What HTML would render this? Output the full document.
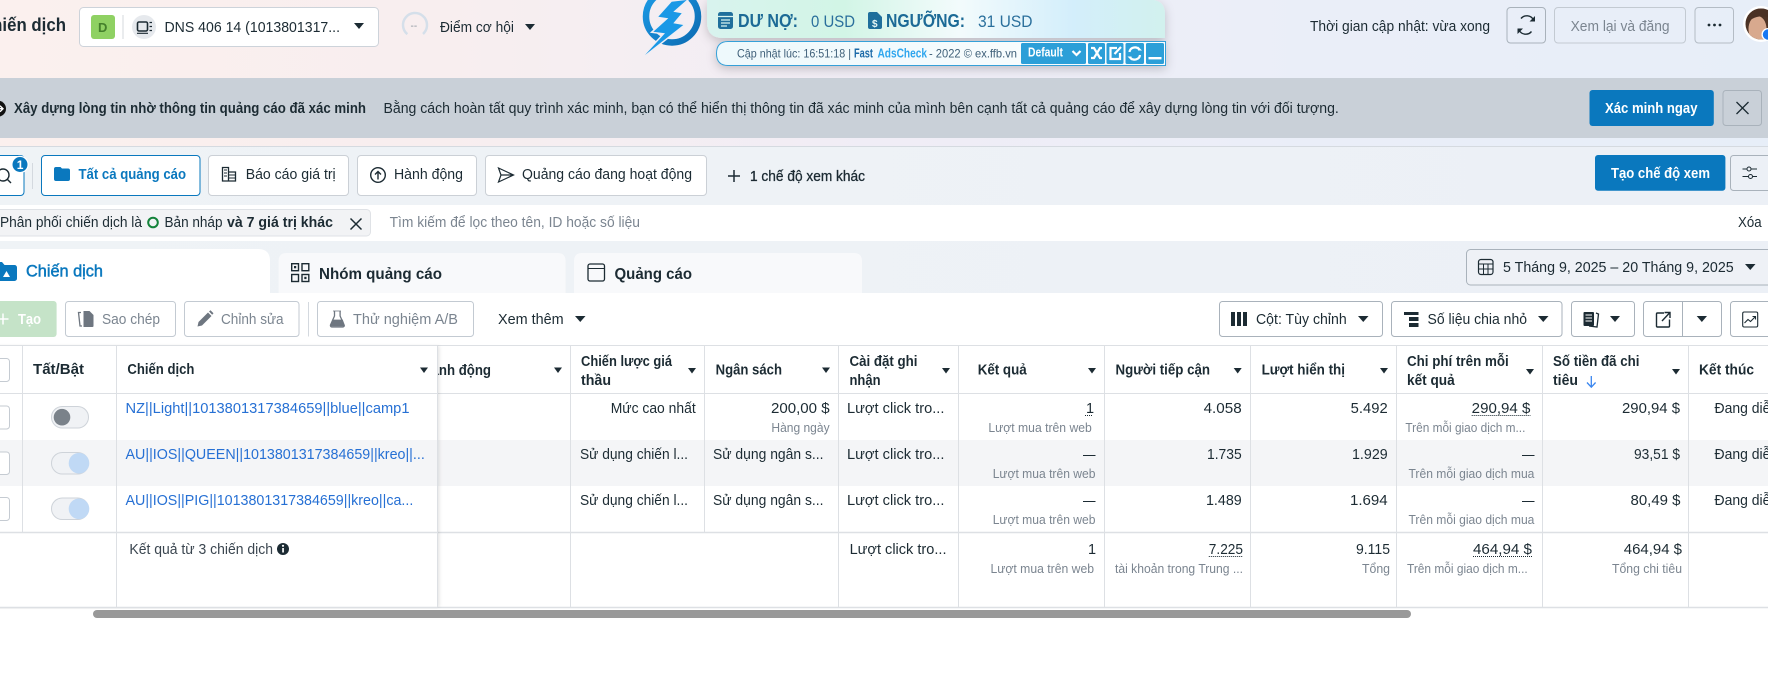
<!DOCTYPE html>
<html lang="vi">
<head>
<meta charset="utf-8">
<title>Chiến dịch</title>
<style>
html,body{margin:0;padding:0;width:1768px;height:683px;overflow:hidden;background:#fff}
svg{display:block}
text{font-family:"Liberation Sans","Noto Sans CJK SC",sans-serif;font-size:14.5px;fill:#1c2b33;white-space:pre}
.b{font-weight:700}
.m{stroke:#1c2b33;stroke-width:.3}
.s{font-size:12.5px;fill:#7b8590}
.l{fill:#2670d4}
.g{fill:#7b8590}
.w{fill:#fff}
.box{fill:#fff;stroke:#b4bcc5;stroke-width:1}
.tr{fill:#f2f4f6;stroke:#b4bcc5;stroke-width:1}
.ln{stroke:#dde0e4;stroke-width:1}
.ar{fill:#1c2b33}
.ico{fill:none;stroke:#1c2b33;stroke-width:1.4}
.wi{fill:none;stroke:#fff;stroke-width:2.2}
</style>
</head>
<body>
<svg width="1768" height="683" viewBox="0 0 1768 683" xmlns="http://www.w3.org/2000/svg">
<defs>
<linearGradient id="bg" x1="0" x2="1" y1="0" y2="0"><stop offset="0" stop-color="#fbf0ee"/><stop offset=".25" stop-color="#f8eeef"/><stop offset=".5" stop-color="#f0edf6"/><stop offset=".75" stop-color="#eaeef8"/><stop offset="1" stop-color="#e7eef8"/></linearGradient>
<linearGradient id="bg2" x1="0" x2="1" y1="0" y2="0"><stop offset="0" stop-color="#eff3f6"/><stop offset="1" stop-color="#ecf0f6"/></linearGradient>
<linearGradient id="pn" x1="0" x2="1" y1="0" y2="0"><stop offset="0" stop-color="#d8f3ee"/><stop offset=".3" stop-color="#d2f5e6"/><stop offset=".55" stop-color="#f3fbfc"/><stop offset=".8" stop-color="#d3eefb"/><stop offset="1" stop-color="#d2f1ee"/></linearGradient>
<linearGradient id="br" x1="0" x2="1" y1="0" y2="0"><stop offset="0" stop-color="#eef9fc"/><stop offset="1" stop-color="#fbfdfe"/></linearGradient>
<linearGradient id="rg" x1="0" x2="1" y1="0" y2="1"><stop offset="0" stop-color="#1c9be6"/><stop offset="1" stop-color="#0c6cb3"/></linearGradient>
<filter id="sd" x="-10%" y="-30%" width="120%" height="170%"><feDropShadow dx="0" dy="3" stdDeviation="5" flood-color="#000" flood-opacity=".2"/></filter>
<filter id="ss" x="-5%" y="-5%" width="110%" height="110%"><feDropShadow dx="2" dy="0" stdDeviation="1.5" flood-color="#000" flood-opacity=".1"/></filter>
<clipPath id="av"><circle cx="1761" cy="24" r="15.5"/></clipPath>
</defs>

<!-- backgrounds -->
<rect x="0" y="0" width="1768" height="146" fill="url(#bg)"/>
<rect x="0" y="78" width="1768" height="60" fill="#c9d0d8"/>
<rect x="0" y="146" width="1768" height="59" fill="url(#bg2)"/>
<rect x="0" y="146" width="1768" height="1" fill="#d5dae0"/>
<rect x="0" y="241" width="1768" height="52" fill="url(#bg2)"/>

<!-- top bar -->
<text class="b" x="-20" y="31" style="font-size:18px" textLength="86" lengthAdjust="spacingAndGlyphs">Chiến dịch</text>
<rect class="box" x="79.5" y="7.5" width="299" height="39" rx="4" style="stroke:#cdd3da"/>
<rect x="91" y="15" width="24" height="24" rx="3" fill="#8fd163"/>
<text class="b" x="98" y="32" style="font-size:13px;fill:#44802b">D</text>
<line x1="123" y1="15" x2="123" y2="39" stroke="#d5dade"/>
<circle cx="144" cy="27" r="12" fill="#e6e9ed"/>
<rect x="137.5" y="22" width="10" height="9" rx="1.5" fill="none" stroke="#1c2b33" stroke-width="1.6"/>
<path d="M137 33.3h11M149.5 22.5h2.500M149.5 26.5h2.500M149.5 30.5h2.500" stroke="#1c2b33" stroke-width="1.2"/>
<text x="164.5" y="32" style="font-size:15px" textLength="175.5" lengthAdjust="spacingAndGlyphs">DNS 406 14 (1013801317...</text>
<path class="ar" d="M354 23h10l-5 6z"/>
<circle cx="415" cy="25" r="12" fill="none" stroke="#d5dfea" stroke-width="2.5" stroke-dasharray="58 18" transform="rotate(130 415 25)"/>
<text x="410.5" y="29" style="font-size:10px;fill:#8a949e">--</text>
<text x="440" y="32" textLength="74" lengthAdjust="spacingAndGlyphs">Điểm cơ hội</text>
<path class="ar" d="M525 24h10l-5 6z"/>

<!-- logo -->
<circle cx="672" cy="16.5" r="26" fill="none" stroke="url(#rg)" stroke-width="6.5"/>
<path d="M686.7 0L671.7 1.7L658.3 16.7L668.3 18.3L653.3 31.7L665 33.3L645 55L683.3 25L673.3 23.3L681.7 13.3L673.3 11.7Z" fill="#f0eef4" stroke="#f0eef4" stroke-width="3"/>
<path d="M686.7 0L671.7 1.7L658.3 16.7L668.3 18.3L653.3 31.7L665 33.3L645 55L683.3 25L673.3 23.3L681.7 13.3L673.3 11.7Z" fill="#1a98e6"/>

<!-- checker panel -->
<g filter="url(#sd)">
<path d="M707 0H1154Q1165 2 1165 14V38H723Q707 38 707 22Z" fill="url(#pn)"/>
<path d="M728 41.5H1165.5V65.5H728Q716.5 65.5 716.5 53.5T728 41.5Z" fill="url(#br)" stroke="#35a0d8"/>
</g>
<path d="M718 14.5a2.5 2.5 0 0 1 2.5-2.5h10a2.5 2.5 0 0 1 2.5 2.5V26.5a2.5 2.5 0 0 1-2.5 2.5h-10a2.5 2.5 0 0 1-2.5-2.5Z" fill="#1f6f9c"/>
<path d="M718 16.5h15M721 20h9M721 23h9M721 26h6" stroke="#d8f3ee" stroke-width="1.2"/>
<text class="b" x="738" y="27" style="font-size:18px;fill:#1c6a96" textLength="60" lengthAdjust="spacingAndGlyphs">DƯ NỢ:</text>
<text x="811" y="27" style="font-size:17px;fill:#2a6f9c" textLength="44" lengthAdjust="spacingAndGlyphs">0 USD</text>
<path d="M868 14a2 2 0 0 1 2-2h7l5 5v10a2 2 0 0 1-2 2h-10a2 2 0 0 1-2-2Z" fill="#1f6f9c"/>
<text class="b" x="872" y="27" style="font-size:10px;fill:#e6f7f5">$</text>
<text class="b" x="886" y="27" style="font-size:18px;fill:#1c6a96" textLength="79" lengthAdjust="spacingAndGlyphs">NGƯỠNG:</text>
<text x="978" y="27" style="font-size:17px;fill:#2a6f9c" textLength="54.5" lengthAdjust="spacingAndGlyphs">31 USD</text>

<text x="737" y="57.5" style="font-size:12px;fill:#3e5f78" textLength="114" lengthAdjust="spacingAndGlyphs">Cập nhật lúc: 16:51:18 |</text>
<text class="b" x="854" y="57.5" style="font-size:12.5px;fill:#1c6aa8" textLength="19" lengthAdjust="spacingAndGlyphs">Fast</text>
<text class="b" x="877.5" y="57.5" style="font-size:12.5px;fill:#2fa6ee" textLength="49.5" lengthAdjust="spacingAndGlyphs">AdsCheck</text>
<text x="929" y="57.5" style="font-size:12px;fill:#3e5f78" textLength="88" lengthAdjust="spacingAndGlyphs">- 2022 © ex.ffb.vn</text>

<rect x="1021" y="43" width="65" height="21" rx="1.5" fill="#2c9fd8"/>
<text class="b w" x="1028" y="56.7" style="font-size:12.5px;fill:#fff" textLength="35" lengthAdjust="spacingAndGlyphs">Default</text>
<path class="wi" d="M1072.5 51l4 4 4-4"/>
<rect x="1088" y="43" width="17" height="21" rx="1.5" fill="#2c9fd8"/>
<path class="wi" d="M1091 48h3l6 10h2M1091 58h3l6-10h2"/>
<rect x="1106.5" y="43" width="17" height="21" rx="1.5" fill="#2c9fd8"/>
<path class="wi" d="M1117 48h-6.5v11h9.5v-6M1114.5 54l6.5-7"/>
<rect x="1125.5" y="43" width="18.500" height="21" rx="1.5" fill="#2c9fd8"/>
<path class="wi" d="M1129.5 52a5.5 5 0 0 1 9.5-3M1140 55a5.5 5 0 0 1-9.5 3"/>
<path d="M1138 46.5v4h4zM1131.5 60.5v-4h-4z" fill="#fff"/>
<rect x="1146" y="43" width="18" height="21" rx="1.5" fill="#2c9fd8"/>
<rect x="1148.5" y="57" width="13" height="2.4" fill="#fff"/>

<!-- top right -->
<text x="1310" y="31" textLength="180" lengthAdjust="spacingAndGlyphs">Thời gian cập nhật: vừa xong</text>
<rect x="1507" y="7.5" width="38.5" height="35.5" rx="3.5" fill="none" stroke="#a9b2bb"/>
<path class="ico" style="stroke-width:1.4" d="M1533.500 20a7.500 7.500 0 0 0-12.500-1.500M1519 30a7.500 7.500 0 0 0 12.500 1.500"/>
<path d="M1535 16v5.500h-5.500zM1517.500 34v-5.500h5.500z" fill="#1c2b33"/>
<rect x="1554.5" y="7.5" width="131" height="35.5" rx="3.5" fill="none" stroke="#c3cad2"/>
<text class="g" x="1570.6" y="31" textLength="99" lengthAdjust="spacingAndGlyphs">Xem lại và đăng</text>
<rect x="1695" y="7.5" width="38.5" height="35.5" rx="3.5" fill="none" stroke="#b4bcc5"/>
<circle cx="1709" cy="25" r="1.4" fill="#1c2b33"/><circle cx="1714.5" cy="25" r="1.4" fill="#1c2b33"/><circle cx="1720" cy="25" r="1.4" fill="#1c2b33"/>
<circle cx="1761" cy="24" r="18" fill="#fff"/>
<g clip-path="url(#av)">
<rect x="1745" y="8" width="32" height="32" fill="#4e3426"/>
<ellipse cx="1757.5" cy="29" rx="9" ry="13" fill="#d8a98e"/>
<path d="M1746 26Q1752 14 1768 17L1776 8H1745Z" fill="#4a3124"/>
</g>
<circle cx="1768" cy="34.5" r="6.5" fill="#fff"/><circle cx="1768" cy="34.5" r="5.2" fill="#1877f2"/>

<!-- banner -->
<circle cx="-2" cy="108.7" r="8" fill="#111"/>
<path d="M-5 108.7h8M0 105.700l3 3-3 3" stroke="#fff" stroke-width="1.4" fill="none"/>
<text class="b" x="14" y="113" textLength="352" lengthAdjust="spacingAndGlyphs">Xây dựng lòng tin nhờ thông tin quảng cáo đã xác minh</text>
<text x="383.5" y="113" textLength="955.3" lengthAdjust="spacingAndGlyphs">Bằng cách hoàn tất quy trình xác minh, bạn có thể hiển thị thông tin đã xác minh của mình bên cạnh tất cả quảng cáo để xây dựng lòng tin với đối tượng.</text>
<rect x="1589.5" y="90" width="124.3" height="36" rx="3" fill="#0a78be"/>
<text class="b w" x="1605" y="113" style="fill:#fff" textLength="92.5" lengthAdjust="spacingAndGlyphs">Xác minh ngay</text>
<rect x="1723" y="90.5" width="38.5" height="35" rx="3" fill="none" stroke="#a9b2bb"/>
<path d="M1736.5 102l12 12M1748.5 102l-12 12" stroke="#1c2b33" stroke-width="1.3"/>

<!-- views row -->
<rect x="-8" y="155.5" width="32" height="40" rx="3.5" fill="#fff" stroke="#0a78be"/>
<circle cx="3" cy="175" r="6" class="ico"/>
<path class="ico" d="M7.5 179.500l3.500 3.500"/>
<circle cx="20" cy="164.500" r="8.7" fill="#fff"/><circle cx="20" cy="164.500" r="7.5" fill="#0a78be"/>
<text class="b" x="16.8" y="169" style="font-size:12px;fill:#fff">1</text>
<line x1="32.5" y1="163" x2="32.5" y2="189" stroke="#d4d9df"/>

<rect x="41.5" y="155.5" width="158.500" height="40" rx="3.5" fill="#fff" stroke="#0a78be"/>
<path d="M54 169a2 2 0 0 1 2-2h4.500l1.500 1.500h6a2 2 0 0 1 2 2v8.500a2 2 0 0 1-2 2h-12a2 2 0 0 1-2-2Z" fill="#0a78be"/>
<text class="b" x="78.5" y="179" style="fill:#0a78be" textLength="107.500" lengthAdjust="spacingAndGlyphs">Tất cả quảng cáo</text>

<rect class="box" x="208.5" y="155.5" width="140" height="40" rx="3.5" style="stroke:#cbd0d6"/>
<path d="M222.5 181v-13.500h6v13.500zM228.5 172h7v9h-7z" fill="none" stroke="#1c2b33" stroke-width="1.3"/>
<path d="M224 170h3M224 173h3M224 176h3M228.5 175h7M228.5 178h7" stroke="#1c2b33" stroke-width="1.1"/>
<text x="245.7" y="179" textLength="90" lengthAdjust="spacingAndGlyphs">Báo cáo giá trị</text>

<rect class="box" x="357.5" y="155.5" width="119" height="40" rx="3.5" style="stroke:#cbd0d6"/>
<circle class="ico" cx="378" cy="175" r="7.3"/>
<path class="ico" d="M378 179.5v-8M375 174.5l3-3 3 3"/>
<text x="394" y="179" textLength="69" lengthAdjust="spacingAndGlyphs">Hành động</text>

<rect class="box" x="485.5" y="155.5" width="221" height="40" rx="3.5" style="stroke:#cbd0d6"/>
<path class="ico" style="stroke-width:1.2" d="M498.5 168l15 7-15 7 2.500-7zM501 175h12.500"/>
<text x="522" y="179" textLength="170" lengthAdjust="spacingAndGlyphs">Quảng cáo đang hoạt động</text>

<path d="M734 170v12M728 176h12" stroke="#1c2b33" stroke-width="1.5"/>
<text class="m" x="750" y="181" textLength="115" lengthAdjust="spacingAndGlyphs">1 chế độ xem khác</text>

<rect x="1595" y="155" width="130.4" height="35.7" rx="3" fill="#0a78be"/>
<text class="b" x="1611" y="178" style="fill:#fff" textLength="99" lengthAdjust="spacingAndGlyphs">Tạo chế độ xem</text>
<rect x="1730.5" y="155.5" width="50" height="35" rx="3" fill="none" stroke="#a9b2bb"/>
<path class="ico" style="stroke-width:1" d="M1742.5 169h4.500M1751 169h6M1742.5 176.500h6M1752.5 176.500h4.500"/>
<circle class="ico" style="stroke-width:1" cx="1749" cy="169" r="2"/><circle class="ico" style="stroke-width:1" cx="1750.5" cy="176.500" r="2"/>

<!-- filter row -->
<rect x="0" y="205" width="1768" height="36" fill="#fff"/>
<rect x="-10" y="209.5" width="380.5" height="26.5" rx="4" fill="#f2f3f5" stroke="#dfe2e6"/>
<text x="0" y="227" textLength="142" lengthAdjust="spacingAndGlyphs">Phân phối chiến dịch là</text>
<circle cx="153" cy="222.5" r="4.8" fill="none" stroke="#14833b" stroke-width="2"/>
<text x="164.5" y="227" textLength="58" lengthAdjust="spacingAndGlyphs">Bản nháp</text>
<text class="b" x="227" y="227" textLength="106" lengthAdjust="spacingAndGlyphs">và 7 giá trị khác</text>
<path d="M350.5 218.5l11 11M361.5 218.5l-11 11" stroke="#1c2b33" stroke-width="1.5"/>
<text class="g" x="389.6" y="227" textLength="250.4" lengthAdjust="spacingAndGlyphs">Tìm kiếm để lọc theo tên, ID hoặc số liệu</text>
<text x="1738" y="227" textLength="23.6" lengthAdjust="spacingAndGlyphs">Xóa</text>

<!-- tabs -->
<path d="M-10 293V249H258Q270 249 270 261V293Z" fill="#fff"/>
<path d="M0 262h2l2.500 3h10a2.500 2.500 0 0 1 2.500 2.500v11a2.500 2.500 0 0 1-2.500 2.500H0Z" fill="#0a78be"/>
<path d="M3 277l3.500-6 3.500 6z" fill="#fff"/>
<text class="m" x="26" y="276.7" style="font-size:17px;fill:#0a78be;stroke:#0a78be;stroke-width:.5" textLength="77" lengthAdjust="spacingAndGlyphs">Chiến dịch</text>

<path d="M278.6 293V261Q278.6 253 286.6 253H557.6Q565.6 253 565.6 261V293Z" fill="#f8f9fb"/>
<g fill="none" stroke="#1c2b33" stroke-width="1.4">
<rect x="291.7" y="263.7" width="6.8" height="7"/><rect x="302" y="263.7" width="6.8" height="7"/><rect x="291.7" y="274.5" width="6.8" height="7"/><rect x="302" y="274.5" width="6.8" height="7"/>
</g>
<rect x="294" y="266" width="2.2" height="2.3" fill="#1c2b33"/><rect x="304.3" y="276.8" width="2.2" height="2.3" fill="#1c2b33"/>
<text class="b" x="319" y="279" style="font-size:15.5px" textLength="123" lengthAdjust="spacingAndGlyphs">Nhóm quảng cáo</text>

<path d="M574 293V261Q574 253 582 253H854Q862 253 862 261V293Z" fill="#f8f9fb"/>
<rect x="588" y="264" width="16.5" height="17" rx="2" fill="none" stroke="#1c2b33" stroke-width="1.3"/>
<path d="M588 268.5h16.5" stroke="#1c2b33" stroke-width="1"/>
<text class="b" x="614.5" y="279" style="font-size:15.5px" textLength="77.5" lengthAdjust="spacingAndGlyphs">Quảng cáo</text>

<rect x="1466.5" y="249.5" width="320" height="35.5" rx="4" fill="#eef1f6" stroke="#a9b2bb"/>
<rect class="ico" x="1478.5" y="259.5" width="14.5" height="15" rx="2.5" style="stroke-width:1.2"/>
<path class="ico" style="stroke-width:1" d="M1478.5 264h14.500M1478.5 269h14.500M1483.5 264v10.500M1488 264v10.500"/>
<text x="1503" y="272" style="font-size:15px" textLength="230.7" lengthAdjust="spacingAndGlyphs">5 Tháng 9, 2025 – 20 Tháng 9, 2025</text>
<path class="ar" d="M1745 264h10.500l-5.250 6z"/>

<!-- toolbar -->
<rect x="-6" y="301" width="62.6" height="36" rx="3" fill="#c5e3c8"/>
<path d="M3 313.5v11M-2.500 319h11" stroke="#fff" stroke-width="1.5"/>
<text class="b" x="18" y="324" style="fill:#fff" textLength="23" lengthAdjust="spacingAndGlyphs">Tạo</text>

<rect class="box" x="65.5" y="301.5" width="110" height="35" rx="3" style="stroke:#c3cad2"/>
<path d="M83.5 311h6l4 4v11a1 1 0 0 1-1 1h-9Z" fill="#6e7680"/>
<path d="M81 312.5h-2.500l1.500 13.500h2" fill="none" stroke="#6e7680" stroke-width="1.3"/>
<text class="g" x="102" y="324" textLength="58" lengthAdjust="spacingAndGlyphs">Sao chép</text>

<rect class="box" x="184.5" y="301.5" width="114.5" height="35" rx="3" style="stroke:#c3cad2"/>
<path d="M197.5 326.5l1-4.500 9.500-9.500 3.500 3.500-9.500 9.500zM209 311.5l1.500-1.300 3 3-1.300 1.500z" fill="#6e7680"/>
<text class="g" x="221" y="324" textLength="62.6" lengthAdjust="spacingAndGlyphs">Chỉnh sửa</text>
<line x1="308.5" y1="302" x2="308.5" y2="336.5" stroke="#d4d9df"/>

<rect class="box" x="317.5" y="301.5" width="156" height="35" rx="3" style="stroke:#c3cad2"/>
<path d="M334.5 311v5l-4 9a1.500 1.500 0 0 0 1.300 2h11a1.500 1.500 0 0 0 1.300-2l-4-9v-5" fill="none" stroke="#6e7680" stroke-width="1.3"/>
<path d="M333 311h8M332.5 320h10l2 6H331z" stroke="#6e7680" fill="#6e7680" stroke-width=".8"/>
<text class="g" x="353" y="324" textLength="105" lengthAdjust="spacingAndGlyphs">Thử nghiệm A/B</text>
<text x="498" y="324" textLength="65.7" lengthAdjust="spacingAndGlyphs">Xem thêm</text>
<path class="ar" d="M575 316h10.500l-5.250 6z"/>

<rect class="box" x="1219.5" y="301.5" width="163" height="35" rx="3" style="stroke:#a9b2bb"/>
<path d="M1231 312h4v14h-4zM1237 312h4v14h-4zM1243 312h4v14h-4z" fill="#1c2b33"/>
<text x="1256" y="324" textLength="90.7" lengthAdjust="spacingAndGlyphs">Cột: Tùy chỉnh</text>
<path class="ar" d="M1358 316h10.500l-5.250 6z"/>

<rect class="box" x="1391.5" y="301.5" width="170.5" height="35" rx="3" style="stroke:#a9b2bb"/>
<path d="M1404 312h14.500v3h-14.500zM1409 317h9.500v4h-9.500zM1409 323h9.500v4h-9.500z" fill="#1c2b33"/>
<text x="1427.5" y="324" textLength="99.5" lengthAdjust="spacingAndGlyphs">Số liệu chia nhỏ</text>
<path class="ar" d="M1538 316h10.500l-5.250 6z"/>

<rect class="box" x="1571.5" y="301.5" width="63" height="35" rx="3" style="stroke:#a9b2bb"/>
<rect x="1583.5" y="312" width="10.5" height="14" rx="1" fill="#1c2b33"/>
<path d="M1585.5 315h6.500M1585.5 318h6.500M1585.5 321h6.500" stroke="#fff" stroke-width="1"/>
<path d="M1596 313l2.500 1-1.500 13-8-1" fill="none" stroke="#1c2b33" stroke-width="1.3"/>
<path class="ar" d="M1610 316h10l-5 6z"/>

<rect class="box" x="1643.5" y="301.5" width="78" height="35" rx="3" style="stroke:#a9b2bb"/>
<line x1="1682.5" y1="301.5" x2="1682.5" y2="336.5" stroke="#a9b2bb"/>
<path class="ico" d="M1664 313h-6.500a1 1 0 0 0-1 1v12a1 1 0 0 0 1 1h11a1 1 0 0 0 1-1v-6.500M1662 321l7.500-8M1664.5 312.5h5.500v5.500"/>
<path class="ar" d="M1696.7 316h10.300l-5.150 6z"/>

<rect class="box" x="1730.5" y="301.5" width="50" height="35" rx="3" style="stroke:#a9b2bb"/>
<rect class="ico" x="1742.7" y="312" width="15" height="15" rx="1.5" style="stroke-width:1.1"/>
<path class="ico" style="stroke-width:1.1" d="M1744.5 323l3.500-3.500 2.500 2 5-5M1752.5 316.500h3v3"/>

<!-- table -->
<rect x="0" y="440" width="1768" height="46" fill="#f4f5f7"/>
<g class="ln">
<line x1="0" y1="345.5" x2="1768" y2="345.5"/>
<line x1="0" y1="393.5" x2="1768" y2="393.5"/>
<line x1="0" y1="532.5" x2="1768" y2="532.5" style="stroke-width:1.5"/>
<line x1="0" y1="607.5" x2="1768" y2="607.5" style="stroke-width:1.5"/>
<line x1="570.5" y1="346" x2="570.5" y2="607"/>
<line x1="704.5" y1="346" x2="704.5" y2="532"/>
<line x1="838.5" y1="346" x2="838.5" y2="607"/>
<line x1="958.5" y1="346" x2="958.5" y2="607"/>
<line x1="1104.5" y1="346" x2="1104.5" y2="607"/>
<line x1="1250.5" y1="346" x2="1250.5" y2="607"/>
<line x1="1396.5" y1="346" x2="1396.5" y2="607"/>
<line x1="1542.5" y1="346" x2="1542.5" y2="607"/>
<line x1="1688.5" y1="346" x2="1688.5" y2="607"/>
</g>

<!-- header cells scrolled -->
<text class="b" x="422" y="375" textLength="69" lengthAdjust="spacingAndGlyphs">Hành động</text>
<path class="ar" d="M554 367.5h8l-4 5.500z"/>
<text class="b" x="581" y="366" textLength="91" lengthAdjust="spacingAndGlyphs">Chiến lược giá</text>
<text class="b" x="581" y="385" textLength="30" lengthAdjust="spacingAndGlyphs">thầu</text>
<path class="ar" d="M688 368h8l-4 5.500z"/>
<text class="b" x="715.6" y="374.3" textLength="66.4" lengthAdjust="spacingAndGlyphs">Ngân sách</text>
<path class="ar" d="M822 367.5h8l-4 5.500z"/>
<text class="b" x="849.5" y="366" textLength="68" lengthAdjust="spacingAndGlyphs">Cài đặt ghi</text>
<text class="b" x="849.5" y="385" textLength="31" lengthAdjust="spacingAndGlyphs">nhận</text>
<path class="ar" d="M942 368h8l-4 5.500z"/>
<text class="b" x="977.7" y="374.3" textLength="49" lengthAdjust="spacingAndGlyphs">Kết quả</text>
<path class="ar" d="M1088 368h8l-4 5.500z"/>
<text class="b" x="1115.5" y="374.3" textLength="94.5" lengthAdjust="spacingAndGlyphs">Người tiếp cận</text>
<path class="ar" d="M1233.7 368h8l-4 5.500z"/>
<text class="b" x="1261.6" y="374.3" textLength="83.4" lengthAdjust="spacingAndGlyphs">Lượt hiển thị</text>
<path class="ar" d="M1380 368h8l-4 5.500z"/>
<text class="b" x="1407" y="366" textLength="101.7" lengthAdjust="spacingAndGlyphs">Chi phí trên mỗi</text>
<text class="b" x="1407" y="385" textLength="47.7" lengthAdjust="spacingAndGlyphs">kết quả</text>
<path class="ar" d="M1526 369h8l-4 5.500z"/>
<text class="b" x="1553" y="366" textLength="86.5" lengthAdjust="spacingAndGlyphs">Số tiền đã chi</text>
<text class="b" x="1553" y="385" textLength="25" lengthAdjust="spacingAndGlyphs">tiêu</text>
<path d="M1591.3 376v11M1587 382.5l4.300 4.700 4.300-4.700" fill="none" stroke="#3a86ef" stroke-width="1.3"/>
<path class="ar" d="M1672 369h8l-4 5.500z"/>
<text class="b" x="1699" y="374.3" textLength="55" lengthAdjust="spacingAndGlyphs">Kết thúc</text>

<!-- row 1 -->
<text x="610.7" y="413" textLength="85" lengthAdjust="spacingAndGlyphs">Mức cao nhất</text>
<text x="771" y="413" textLength="58.6" lengthAdjust="spacingAndGlyphs">200,00 $</text>
<text class="s" x="771.4" y="432" textLength="58.2" lengthAdjust="spacingAndGlyphs">Hàng ngày</text>
<text x="847" y="413" textLength="97.4" lengthAdjust="spacingAndGlyphs">Lượt click tro...</text>
<text x="1086" y="413" textLength="6">1</text>
<line x1="1085" y1="415.5" x2="1092" y2="415.5" stroke="#1c2b33" stroke-dasharray="1 1"/>
<text class="s" x="988.4" y="432" textLength="103.4" lengthAdjust="spacingAndGlyphs">Lượt mua trên web</text>
<text x="1203.6" y="413" textLength="38.1" lengthAdjust="spacingAndGlyphs">4.058</text>
<text x="1350.7" y="413" textLength="37" lengthAdjust="spacingAndGlyphs">5.492</text>
<text x="1471.7" y="413" textLength="58.7" lengthAdjust="spacingAndGlyphs">290,94 $</text>
<line x1="1471.7" y1="415.5" x2="1530.4" y2="415.5" stroke="#1c2b33" stroke-dasharray="1 1"/>
<text class="s" x="1405.4" y="432" textLength="120" lengthAdjust="spacingAndGlyphs">Trên mỗi giao dịch m...</text>
<text x="1622" y="413" textLength="58" lengthAdjust="spacingAndGlyphs">290,94 $</text>
<text x="1714.5" y="413" textLength="80" lengthAdjust="spacingAndGlyphs">Đang diễn ra</text>

<!-- row 2 -->
<text x="580" y="459" textLength="108" lengthAdjust="spacingAndGlyphs">Sử dụng chiến l...</text>
<text x="713" y="459" textLength="110.5" lengthAdjust="spacingAndGlyphs">Sử dụng ngân s...</text>
<text x="847" y="459" textLength="97.4" lengthAdjust="spacingAndGlyphs">Lượt click tro...</text>
<rect x="1083" y="455" width="12.5" height="1" fill="#1c2b33"/>
<text class="s" x="992.7" y="478" textLength="102.8" lengthAdjust="spacingAndGlyphs">Lượt mua trên web</text>
<text x="1207" y="459" textLength="34.7" lengthAdjust="spacingAndGlyphs">1.735</text>
<text x="1352" y="459" textLength="35.7" lengthAdjust="spacingAndGlyphs">1.929</text>
<rect x="1522" y="455" width="12.5" height="1" fill="#1c2b33"/>
<text class="s" x="1408.5" y="478" textLength="125.9" lengthAdjust="spacingAndGlyphs">Trên mỗi giao dịch mua</text>
<text x="1634" y="459" textLength="46" lengthAdjust="spacingAndGlyphs">93,51 $</text>
<text x="1714.5" y="459" textLength="80" lengthAdjust="spacingAndGlyphs">Đang diễn ra</text>

<!-- row 3 -->
<text x="580" y="505" textLength="108" lengthAdjust="spacingAndGlyphs">Sử dụng chiến l...</text>
<text x="713" y="505" textLength="110.5" lengthAdjust="spacingAndGlyphs">Sử dụng ngân s...</text>
<text x="847" y="505" textLength="97.4" lengthAdjust="spacingAndGlyphs">Lượt click tro...</text>
<rect x="1083" y="501" width="12.5" height="1" fill="#1c2b33"/>
<text class="s" x="992.7" y="524" textLength="102.8" lengthAdjust="spacingAndGlyphs">Lượt mua trên web</text>
<text x="1206" y="505" textLength="35.7" lengthAdjust="spacingAndGlyphs">1.489</text>
<text x="1350" y="505" textLength="37.7" lengthAdjust="spacingAndGlyphs">1.694</text>
<rect x="1522" y="501" width="12.5" height="1" fill="#1c2b33"/>
<text class="s" x="1408.5" y="524" textLength="125.9" lengthAdjust="spacingAndGlyphs">Trên mỗi giao dịch mua</text>
<text x="1630.5" y="505" textLength="50" lengthAdjust="spacingAndGlyphs">80,49 $</text>
<text x="1714.5" y="505" textLength="80" lengthAdjust="spacingAndGlyphs">Đang diễn ra</text>

<!-- summary -->
<text x="849.6" y="554" textLength="96.9" lengthAdjust="spacingAndGlyphs">Lượt click tro...</text>
<text x="1088" y="554" textLength="6">1</text>
<text class="s" x="990.5" y="573" textLength="103.5" lengthAdjust="spacingAndGlyphs">Lượt mua trên web</text>
<text x="1208.8" y="554" textLength="34.2" lengthAdjust="spacingAndGlyphs">7.225</text>
<line x1="1208.8" y1="556.5" x2="1243" y2="556.5" stroke="#1c2b33" stroke-dasharray="1 1"/>
<text class="s" x="1115" y="573" textLength="128" lengthAdjust="spacingAndGlyphs">tài khoản trong Trung ...</text>
<text x="1356" y="554" textLength="34" lengthAdjust="spacingAndGlyphs">9.115</text>
<text class="s" x="1362" y="573" textLength="28" lengthAdjust="spacingAndGlyphs">Tổng</text>
<text x="1473" y="554" textLength="59" lengthAdjust="spacingAndGlyphs">464,94 $</text>
<line x1="1473" y1="556.5" x2="1532" y2="556.5" stroke="#1c2b33" stroke-dasharray="1 1"/>
<text class="s" x="1407" y="573" textLength="120.7" lengthAdjust="spacingAndGlyphs">Trên mỗi giao dịch m...</text>
<text x="1623.8" y="554" textLength="58.2" lengthAdjust="spacingAndGlyphs">464,94 $</text>
<text class="s" x="1612" y="573" textLength="70" lengthAdjust="spacingAndGlyphs">Tổng chi tiêu</text>

<!-- sticky columns -->
<g filter="url(#ss)">
<rect x="-10" y="346" width="447.4" height="261" fill="#fff"/>
</g>
<rect x="0" y="440" width="437.4" height="46" fill="#f4f5f7"/>
<g class="ln">
<line x1="0" y1="345.5" x2="437.5" y2="345.5"/>
<line x1="0" y1="393.5" x2="437.5" y2="393.5"/>
<line x1="0" y1="532.5" x2="437.5" y2="532.5" style="stroke-width:1.5"/>
<line x1="0" y1="607.5" x2="437.5" y2="607.5" style="stroke-width:1.5"/>
<line x1="22.5" y1="346" x2="22.5" y2="532"/>
<line x1="116.5" y1="346" x2="116.5" y2="607"/>
<line x1="437.5" y1="346" x2="437.5" y2="607"/>
</g>
<rect x="-8" y="358.5" width="17.5" height="23" rx="3" fill="#fff" stroke="#c5cbd2"/>
<rect x="-8" y="406" width="17.5" height="23" rx="3" fill="#fff" stroke="#c5cbd2"/>
<rect x="-8" y="452" width="17.5" height="22.5" rx="3" fill="#fff" stroke="#c5cbd2"/>
<rect x="-8" y="497.5" width="17.5" height="23" rx="3" fill="#fff" stroke="#c5cbd2"/>

<text class="b" x="33" y="374" textLength="51" lengthAdjust="spacingAndGlyphs">Tất/Bật</text>
<text class="b" x="127.4" y="374" textLength="67" lengthAdjust="spacingAndGlyphs">Chiến dịch</text>
<path class="ar" d="M420 367.5h8l-4 5.500z"/>

<rect x="51.5" y="406.5" width="37" height="21.5" rx="10.75" fill="#f0f2f5" stroke="#ced3d9"/>
<circle cx="62" cy="417.2" r="8.3" fill="#7a828a"/>
<text class="l" x="125.5" y="413" textLength="284" lengthAdjust="spacingAndGlyphs">NZ||Light||1013801317384659||blue||camp1</text>

<rect x="51.5" y="452.5" width="37" height="21.5" rx="10.75" fill="#f0f2f5" stroke="#ced3d9"/>
<circle cx="79" cy="463.2" r="10.3" fill="#c0d9f5"/>
<text class="l" x="125.5" y="459" textLength="299.3" lengthAdjust="spacingAndGlyphs">AU||IOS||QUEEN||1013801317384659||kreo||...</text>

<rect x="51.5" y="498" width="37" height="21.5" rx="10.75" fill="#f0f2f5" stroke="#ced3d9"/>
<circle cx="79" cy="508.8" r="10.3" fill="#c0d9f5"/>
<text class="l" x="125.5" y="505" textLength="287.8" lengthAdjust="spacingAndGlyphs">AU||IOS||PIG||1013801317384659||kreo||ca...</text>

<text x="129.4" y="554" style="fill:#3b4650" textLength="143.6" lengthAdjust="spacingAndGlyphs">Kết quả từ 3 chiến dịch</text>
<circle cx="283" cy="549" r="6" fill="#1c2b33"/>
<rect x="282.2" y="548" width="1.7" height="4.5" fill="#fff"/>
<circle cx="283" cy="545.8" r="1.1" fill="#fff"/>

<!-- scrollbar -->
<rect x="93" y="610" width="1318" height="8" rx="4" fill="#999"/>
</svg>
</body>
</html>
